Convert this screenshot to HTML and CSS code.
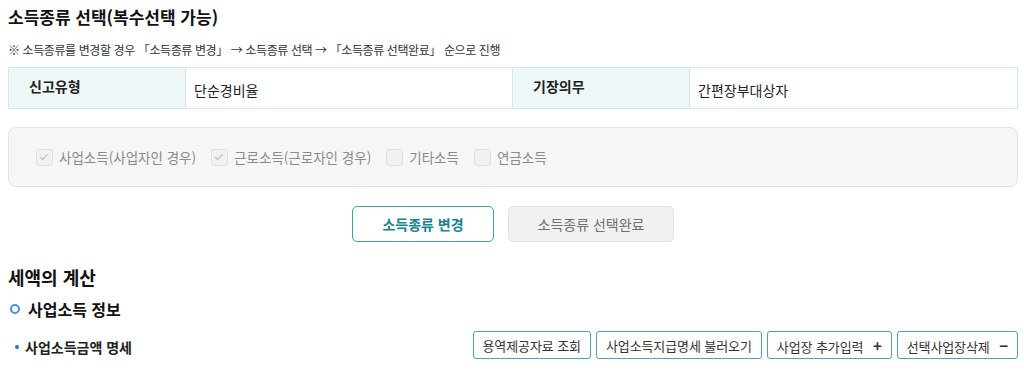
FILE: index.html
```html
<!DOCTYPE html>
<html lang="ko">
<head>
  <meta charset="UTF-8" />
  <title>소득종류 선택</title>
  <link rel="stylesheet" href="styles.css">
</head>
<body>
  <div class="page">
    <h2 class="title">소득종류 선택(복수선택 가능)</h2>
    <p class="note">※ 소득종류를 변경할 경우 「소득종류 변경」 → 소득종류 선택 → 「소득종류 선택완료」 순으로 진행</p>

    <table class="info-table">
      <colgroup>
        <col class="col-th">
        <col class="col-td">
        <col class="col-th">
        <col>
      </colgroup>
      <tr>
        <th>신고유형</th>
        <td>단순경비율</td>
        <th>기장의무</th>
        <td>간편장부대상자</td>
      </tr>
    </table>

    <div class="check-box">
      <label class="check"><span class="box checked"></span>사업소득(사업자인 경우)</label>
      <label class="check"><span class="box checked"></span>근로소득(근로자인 경우)</label>
      <label class="check"><span class="box"></span>기타소득</label>
      <label class="check"><span class="box"></span>연금소득</label>
    </div>

    <div class="btn-row">
      <button class="btn-change">소득종류 변경</button>
      <button class="btn-done">소득종류 선택완료</button>
    </div>

    <h2 class="section-title">세액의 계산</h2>
    <h3 class="sub-title"><span class="ring"></span>사업소득 정보</h3>

    <div class="detail-row">
      <div class="detail-label"><span class="dot"></span>사업소득금액 명세</div>
      <div class="detail-btns">
        <button class="btn-line">용역제공자료 조회</button>
        <button class="btn-line">사업소득지급명세 불러오기</button>
        <button class="btn-line">사업장 추가입력 <span class="sign">+</span></button>
        <button class="btn-line">선택사업장삭제 <span class="sign">−</span></button>
      </div>
    </div>
  </div>
</body>
</html>
```

FILE: styles.css
```css
body {
  margin: 0;
  padding: 0 6px 0 8px;
  font-family: "Noto Sans CJK KR", "Noto Sans", sans-serif;
  color: #222;
  background: #fff;
}
.title {
  margin: 4px 0 0 0;
  font-size: 17px;
  font-weight: bold;
  line-height: 26px;
  color: #111;
}
.note {
  margin: 11px 0 0 0;
  font-size: 12px;
  letter-spacing: -0.4px;
  line-height: 18px;
  color: #333;
}
.info-table {
  width: 100%;
  margin-top: 8px;
  border-collapse: collapse;
  table-layout: fixed;
  font-size: 14px;
}
.col-th { width: 177px; }
.col-td { width: 327px; }
.info-table th,
.info-table td {
  border: 1px solid #d3e7ea;
  height: 36px;
  text-align: left;
}
.info-table th {
  background: #eef7f7;
  font-weight: bold;
  padding: 0 0 4px 20px;
  color: #222;
}
.info-table td {
  padding: 4px 0 0 8px;
  color: #222;
}
.check-box {
  margin-top: 18px;
  height: 58px;
  border: 1px solid #e2e2e2;
  border-radius: 8px;
  background: #f6f6f6;
  display: flex;
  align-items: center;
  padding: 0 0 0 27px;
  gap: 15px;
}
.check {
  display: flex;
  align-items: center;
  font-size: 13.5px;
  color: #8a8a8a;
}
.box {
  width: 15px;
  height: 15px;
  border: 1px solid #e0e0e0;
  border-radius: 3px;
  background: #f1f1f1;
  margin-right: 6px;
  position: relative;
}
.box.checked::after {
  content: "";
  position: absolute;
  left: 5px;
  top: 2px;
  width: 3px;
  height: 7px;
  border: solid #b5b5b5;
  border-width: 0 1px 1px 0;
  transform: rotate(45deg);
}
.btn-row {
  display: flex;
  justify-content: center;
  gap: 14px;
  margin-top: 19px;
}
.btn-change,
.btn-done {
  font-family: inherit;
  font-size: 14px;
  height: 36px;
  border-radius: 5px;
  cursor: pointer;
}
.btn-change {
  width: 142px;
  background: #fff;
  border: 1px solid #3fa3ad;
  color: #16848f;
  font-weight: bold;
}
.btn-done {
  width: 166px;
  background: #f1f1f1;
  border: 1px solid #e4e4e4;
  color: #6f6f6f;
}
.section-title {
  margin: 22px 0 0 0;
  font-size: 18px;
  font-weight: bold;
  line-height: 26px;
  color: #111;
}
.sub-title {
  margin: 7px 0 0 0;
  font-size: 16px;
  font-weight: bold;
  line-height: 24px;
  color: #111;
  display: flex;
  align-items: center;
}
.ring {
  width: 6px;
  height: 6px;
  border: 2px solid #4b8ee0;
  border-radius: 50%;
  margin: 0 8px 0 2px;
}
.detail-row {
  display: flex;
  justify-content: space-between;
  align-items: center;
  margin-top: 10px;
}
.detail-label {
  display: flex;
  align-items: center;
  font-size: 14px;
  font-weight: bold;
  color: #222;
  padding-top: 3px;
}
.dot {
  width: 4px;
  height: 4px;
  border-radius: 50%;
  background: #2f6fd6;
  margin: 0 6px 0 7px;
}
.detail-btns {
  display: flex;
  gap: 5px;
}
.btn-line {
  font-family: inherit;
  font-size: 13px;
  letter-spacing: -0.1px;
  height: 28px;
  padding: 0 9px;
  background: #fff;
  border: 1px solid #4aa7b0;
  border-radius: 3px;
  color: #333;
  cursor: pointer;
}
.sign {
  font-weight: bold;
  font-size: 15px;
  margin-left: 6px;
  color: #333;
}
```
